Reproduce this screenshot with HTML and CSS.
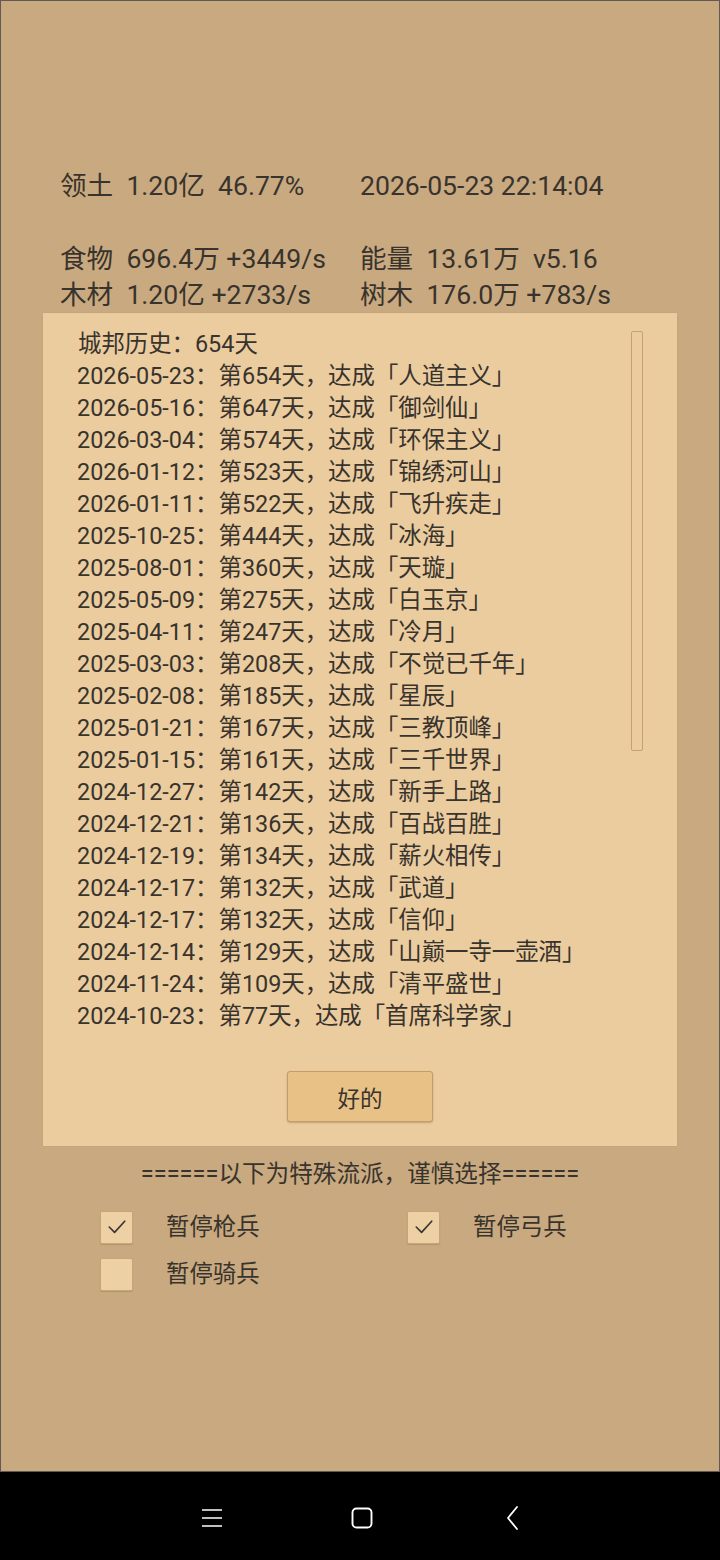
FILE: index.html
```html
<!DOCTYPE html>
<html lang="zh">
<head>
<meta charset="utf-8">
<link rel="stylesheet" href="styles.css">
</head>
<body>
<div class="app">
  <div class="stats">
    <div class="row first">
      <div class="cell">领土&nbsp;&nbsp;1.20亿&nbsp;&nbsp;46.77%</div>
      <div class="cell">2026-05-23 22:14:04</div>
    </div>
    <div class="row">
      <div class="cell">食物&nbsp;&nbsp;696.4万 +3449/s</div>
      <div class="cell">能量&nbsp;&nbsp;13.61万&nbsp;&nbsp;v5.16</div>
    </div>
    <div class="row">
      <div class="cell">木材&nbsp;&nbsp;1.20亿 +2733/s</div>
      <div class="cell">树木&nbsp;&nbsp;176.0万 +783/s</div>
    </div>
  </div>

  <div class="modal">
    <div class="scroll-thumb"></div>
    <ul class="history">
      <li>城邦历史：654天</li>
      <li>2026-05-23：第654天，达成「人道主义」</li>
      <li>2026-05-16：第647天，达成「御剑仙」</li>
      <li>2026-03-04：第574天，达成「环保主义」</li>
      <li>2026-01-12：第523天，达成「锦绣河山」</li>
      <li>2026-01-11：第522天，达成「飞升疾走」</li>
      <li>2025-10-25：第444天，达成「冰海」</li>
      <li>2025-08-01：第360天，达成「天璇」</li>
      <li>2025-05-09：第275天，达成「白玉京」</li>
      <li>2025-04-11：第247天，达成「冷月」</li>
      <li>2025-03-03：第208天，达成「不觉已千年」</li>
      <li>2025-02-08：第185天，达成「星辰」</li>
      <li>2025-01-21：第167天，达成「三教顶峰」</li>
      <li>2025-01-15：第161天，达成「三千世界」</li>
      <li>2024-12-27：第142天，达成「新手上路」</li>
      <li>2024-12-21：第136天，达成「百战百胜」</li>
      <li>2024-12-19：第134天，达成「薪火相传」</li>
      <li>2024-12-17：第132天，达成「武道」</li>
      <li>2024-12-17：第132天，达成「信仰」</li>
      <li>2024-12-14：第129天，达成「山巅一寺一壶酒」</li>
      <li>2024-11-24：第109天，达成「清平盛世」</li>
      <li>2024-10-23：第77天，达成「首席科学家」</li>
    </ul>
    <div class="actions">
      <button class="ok">好的</button>
    </div>
  </div>

  <div class="special-title">======以下为特殊流派，谨慎选择======</div>

  <div class="options">
    <label class="opt">
      <span class="box checked"><svg viewBox="0 0 32 32" width="32" height="32"><path d="M8.5 16 L14 21.5 L24.5 10" fill="none" stroke="#3a352f" stroke-width="1.7" stroke-linecap="round" stroke-linejoin="round"/></svg></span>
      <span class="txt">暂停枪兵</span>
    </label>
    <label class="opt">
      <span class="box checked"><svg viewBox="0 0 32 32" width="32" height="32"><path d="M8.5 16 L14 21.5 L24.5 10" fill="none" stroke="#3a352f" stroke-width="1.7" stroke-linecap="round" stroke-linejoin="round"/></svg></span>
      <span class="txt">暂停弓兵</span>
    </label>
    <label class="opt">
      <span class="box"></span>
      <span class="txt">暂停骑兵</span>
    </label>
  </div>
</div>

<div class="navbar">
  <svg class="nav-icon" width="24" height="24" viewBox="0 0 24 24"><path d="M2 4 H22 M2 12 H22 M2 20 H22" stroke="#fff" stroke-width="1.7" fill="none"/></svg>
  <svg class="nav-icon" width="24" height="24" viewBox="0 0 24 24"><rect x="2.5" y="2.5" width="19" height="19" rx="4" stroke="#fff" stroke-width="1.9" fill="none"/></svg>
  <svg class="nav-icon" width="24" height="24" viewBox="0 0 24 24"><path d="M17 1 L8 12 L17 23" stroke="#fff" stroke-width="1.8" fill="none" stroke-linejoin="round" stroke-linecap="round"/></svg>
</div>
</body>
</html>
```

FILE: styles.css
```css
* { box-sizing: border-box; }
html, body {
  margin: 0;
  padding: 0;
  background: #000;
}
body {
  width: 720px;
  height: 1560px;
  font-family: Roboto, "Noto Sans CJK SC", sans-serif;
  color: #38332d;
  overflow: hidden;
}
.app {
  height: 1472px;
  background: #c9a97f;
  border: 1px solid #5f5a55;
  display: flex;
  flex-direction: column;
}
.stats {
  padding: 167px 0 0 59px;
  font-size: 26.6px;
  line-height: 36px;
}
.row {
  display: grid;
  grid-template-columns: 300px 300px;
  white-space: nowrap;
}
.row.first { margin-bottom: 37px; }

.modal {
  position: relative;
  margin: 0 42px 0 42px;
  background: #ebcc9f;
  padding: 15px 0 24px 34px;
  box-shadow: 0 0 1px rgba(0,0,0,0.15);
}
.scroll-thumb {
  position: absolute;
  left: 588px;
  top: 18px;
  width: 12px;
  height: 420px;
  border: 1px solid #c2a273;
  border-radius: 2px;
}
.history {
  list-style: none;
  margin: 0;
  padding: 0;
  font-size: 23.4px;
  line-height: 32px;
  white-space: nowrap;
}
.history li:first-child { padding-left: 1px; }
.actions {
  display: flex;
  justify-content: center;
  margin-top: 39px;
  padding-right: 34px;
}
.ok {
  width: 146px;
  height: 51px;
  background: #e8c186;
  border: 1px solid #c49c68;
  border-radius: 3px;
  box-shadow: 0 1px 2px rgba(0,0,0,0.2);
  font-family: Roboto, "Noto Sans CJK SC", sans-serif;
  font-size: 22.5px;
  color: #38332d;
  padding: 0;
}
.special-title {
  margin-top: 12px;
  text-align: center;
  font-size: 23.6px;
  line-height: 32px;
  white-space: nowrap;
}
.options {
  display: grid;
  grid-template-columns: 307px 200px;
  row-gap: 15px;
  padding-left: 99px;
  margin-top: 21px;
}
.opt {
  display: flex;
  align-items: center;
  height: 32px;
}
.box {
  width: 33px;
  height: 33px;
  background: #edd1a5;
  border: 1px solid #c7a676;
  border-radius: 2px;
  box-shadow: 0 1px 1px rgba(0,0,0,0.12);
  display: flex;
  align-items: center;
  justify-content: center;
  flex: none;
}
.box svg { display: block; }
.txt {
  margin-left: 33px;
  font-size: 23.4px;
  line-height: 32px;
  white-space: nowrap;
}
.navbar {
  height: 88px;
  background: #000;
  display: flex;
  align-items: center;
  justify-content: center;
  gap: 126px;
  padding: 4px 0 0 3px;
}
.nav-icon { display: block; }
```
